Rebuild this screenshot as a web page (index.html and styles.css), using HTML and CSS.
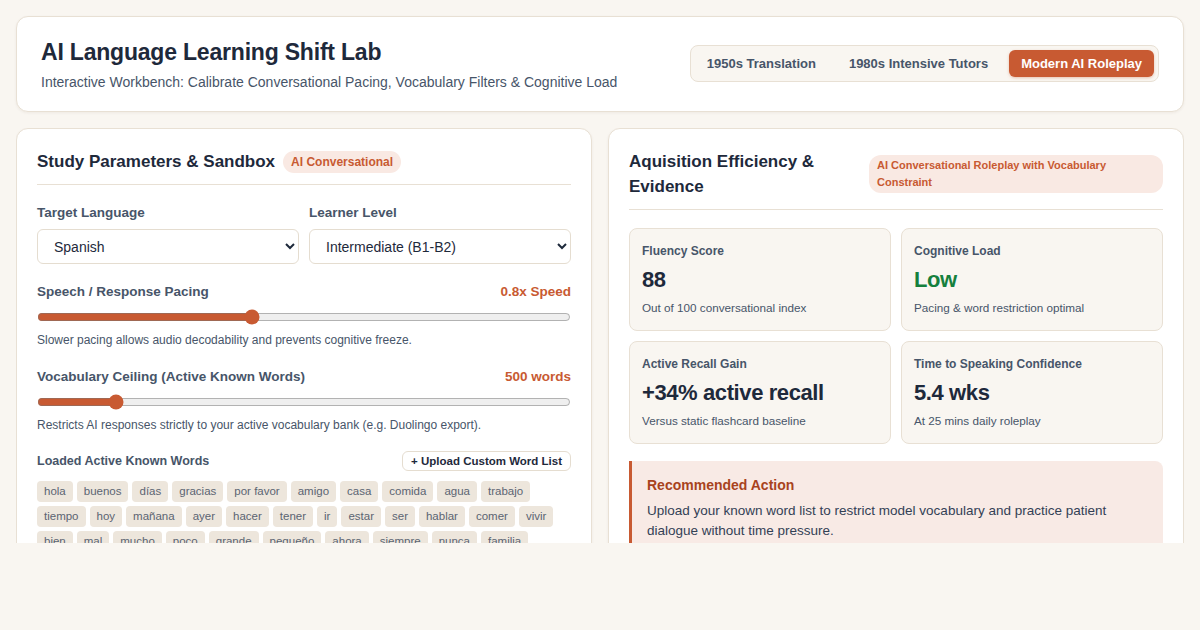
FILE: index.html
```html
<!DOCTYPE html>
<html lang="en">
<head>
    <meta charset="UTF-8">
    <meta name="viewport" content="width=device-width, initial-scale=1.0">
    <title>AI Language Learning Shift Lab</title>
    <link rel="stylesheet" href="styles.css">
</head>
<body>
    <div class="app">
        <div class="header">
            <div class="header-text">
                <h1>AI Language Learning Shift Lab</h1>
                <p>Interactive Workbench: Calibrate Conversational Pacing, Vocabulary Filters &amp; Cognitive Load</p>
            </div>
            <div class="era-tabs">
                <button class="era-tab">1950s Translation</button>
                <button class="era-tab">1980s Intensive Tutors</button>
                <button class="era-tab active">Modern AI Roleplay</button>
            </div>
        </div>

        <div class="workspace">
            <div class="panel">
                <div class="panel-header">
                    <h2>Study Parameters &amp; Sandbox</h2>
                    <span class="badge">AI Conversational</span>
                </div>

                <div class="field-row">
                    <div class="field">
                        <label>Target Language</label>
                        <select>
                            <option>Spanish</option>
                            <option>French</option>
                            <option>Japanese</option>
                        </select>
                    </div>
                    <div class="field">
                        <label>Learner Level</label>
                        <select>
                            <option>Intermediate (B1-B2)</option>
                            <option>Beginner (A1-A2)</option>
                            <option>Advanced (C1-C2)</option>
                        </select>
                    </div>
                </div>

                <div class="slider-group">
                    <div class="slider-head">
                        <span class="slider-label">Speech / Response Pacing</span>
                        <span class="slider-value">0.8x Speed</span>
                    </div>
                    <input type="range" min="0.5" max="1.25" step="0.05" value="0.8">
                    <p class="hint">Slower pacing allows audio decodability and prevents cognitive freeze.</p>
                </div>

                <div class="slider-group">
                    <div class="slider-head">
                        <span class="slider-label">Vocabulary Ceiling (Active Known Words)</span>
                        <span class="slider-value">500 words</span>
                    </div>
                    <input type="range" min="100" max="3000" step="50" value="500">
                    <p class="hint">Restricts AI responses strictly to your active vocabulary bank (e.g. Duolingo export).</p>
                </div>

                <div class="words-head">
                    <span class="words-title">Loaded Active Known Words</span>
                    <button class="upload-btn">+ Upload Custom Word List</button>
                </div>
                <div class="word-tags">
                    <span class="tag">hola</span>
                    <span class="tag">buenos</span>
                    <span class="tag">días</span>
                    <span class="tag">gracias</span>
                    <span class="tag">por favor</span>
                    <span class="tag">amigo</span>
                    <span class="tag">casa</span>
                    <span class="tag">comida</span>
                    <span class="tag">agua</span>
                    <span class="tag">trabajo</span>
                    <span class="tag">tiempo</span>
                    <span class="tag">hoy</span>
                    <span class="tag">mañana</span>
                    <span class="tag">ayer</span>
                    <span class="tag">hacer</span>
                    <span class="tag">tener</span>
                    <span class="tag">ir</span>
                    <span class="tag">estar</span>
                    <span class="tag">ser</span>
                    <span class="tag">hablar</span>
                    <span class="tag">comer</span>
                    <span class="tag">vivir</span>
                    <span class="tag">bien</span>
                    <span class="tag">mal</span>
                    <span class="tag">mucho</span>
                    <span class="tag">poco</span>
                    <span class="tag">grande</span>
                    <span class="tag">pequeño</span>
                    <span class="tag">ahora</span>
                    <span class="tag">siempre</span>
                    <span class="tag">nunca</span>
                    <span class="tag">familia</span>
                </div>
            </div>

            <div class="panel">
                <div class="panel-header results-header">
                    <h2>Aquisition Efficiency &amp; Evidence</h2>
                    <span class="badge badge-wide">AI Conversational Roleplay with Vocabulary Constraint</span>
                </div>

                <div class="metrics">
                    <div class="metric">
                        <div class="metric-label">Fluency Score</div>
                        <div class="metric-value">88</div>
                        <div class="metric-sub">Out of 100 conversational index</div>
                    </div>
                    <div class="metric">
                        <div class="metric-label">Cognitive Load</div>
                        <div class="metric-value good">Low</div>
                        <div class="metric-sub">Pacing &amp; word restriction optimal</div>
                    </div>
                    <div class="metric">
                        <div class="metric-label">Active Recall Gain</div>
                        <div class="metric-value">+34% active recall</div>
                        <div class="metric-sub">Versus static flashcard baseline</div>
                    </div>
                    <div class="metric">
                        <div class="metric-label">Time to Speaking Confidence</div>
                        <div class="metric-value">5.4 wks</div>
                        <div class="metric-sub">At 25 mins daily roleplay</div>
                    </div>
                </div>

                <div class="recommend">
                    <h3>Recommended Action</h3>
                    <p>Upload your known word list to restrict model vocabulary and practice patient dialogue without time pressure.</p>
                </div>
            </div>
        </div>
    </div>
</body>
</html>
```

FILE: styles.css
```css
body {
  margin:0;
  background:#f9f6f1;
  font-family:"Liberation Sans", Arial, sans-serif;
  color:#1e293b;
}
.app {
  padding:16px;
  display:flex;
  flex-direction:column;
  gap:16px;
}
.header {
  background:#fff;
  border:1px solid #e8e0d4;
  border-radius:12px;
  padding:22px 24px 21px;
  display:flex;
  align-items:center;
  justify-content:space-between;
  box-shadow:0 1px 3px rgba(60,40,20,0.06);
}
.header h1 {
  margin:0;
  font-size:23px;
  line-height:26px;
  font-weight:700;
  color:#1e293b;
  letter-spacing:-0.2px;
}
.header p {
  margin:9px 0 0;
  font-size:14px;
  line-height:16px;
  color:#475569;
}
.era-tabs {
  display:flex;
  gap:4px;
  background:#f9f6f1;
  border:1px solid #e8e0d4;
  border-radius:8px;
  padding:4px;
  margin-top:-2px;
}
.era-tab {
  border:none;
  background:transparent;
  font-family:inherit;
  font-size:13px;
  font-weight:700;
  color:#475569;
  padding:6px 12px;
  border-radius:6px;
  cursor:pointer;
}
.era-tab + .era-tab {
  margin-left:5px;
}
.era-tab.active {
  background:#c85a32;
  color:#fff;
  box-shadow:0 1px 3px rgba(200,90,50,0.35);
}
.workspace {
  display:grid;
  grid-template-columns:1fr 1fr;
  gap:16px;
  height:415px;
  overflow:hidden;
}
.panel {
  background:#fff;
  border:1px solid #e8e0d4;
  border-radius:12px;
  padding:20px 20px;
  box-shadow:0 1px 3px rgba(60,40,20,0.06);
}
.panel-header {
  display:flex;
  align-items:center;
  gap:8px;
  padding-bottom:10px;
  border-bottom:1px solid #e8e0d4;
  margin-bottom:20px;
}
.panel-header h2 {
  margin:0;
  font-size:17px;
  font-weight:700;
  color:#1e293b;
  line-height:25px;
}
.badge {
  background:#f9e9e3;
  color:#c85a32;
  font-size:12px;
  line-height:14px;
  font-weight:700;
  padding:4px 8px;
  border-radius:12px;
}
.results-header {
  justify-content:space-between;
  align-items:flex-start;
  gap:24px;
  margin-bottom:18px;
}
.results-header h2 {
  flex:1;
}
.badge-wide {
  flex:0 0 294px;
  box-sizing:border-box;
  line-height:17px;
  padding:2px 8px;
  margin-top:6px;
  font-size:11px;
}
.field-row {
  display:flex;
  gap:10px;
}
.field {
  flex:1;
  display:flex;
  flex-direction:column;
}
.field label {
  font-size:13.5px;
  font-weight:700;
  color:#475569;
  margin-bottom:9px;
}
.field select {
  height:35px;
  border:1px solid #e5ddd0;
  border-radius:6px;
  background:#fff;
  font-family:inherit;
  font-size:14px;
  color:#1e293b;
  padding:0 12px;
}
.slider-group {
  margin-top:20px;
}
.slider-group + .slider-group {
  margin-top:22px;
}
.slider-head {
  display:flex;
  justify-content:space-between;
  font-size:13.5px;
  font-weight:700;
}
.slider-label {
  color:#475569;
}
.slider-value {
  color:#c85a32;
}
.slider-group input {
  width:100%;
  margin:10px 0 8px;
  accent-color:#c85a32;
}
.hint {
  margin:0;
  font-size:12px;
  color:#475569;
}
.words-head {
  display:flex;
  justify-content:space-between;
  align-items:center;
  margin-top:19px;
}
.words-title {
  font-size:12.5px;
  font-weight:700;
  color:#475569;
}
.upload-btn {
  background:#fff;
  border:1px solid #e5ddd0;
  border-radius:6px;
  font-family:inherit;
  font-size:11.5px;
  line-height:14px;
  font-weight:700;
  color:#1e293b;
  padding:2px 8px;
}
.word-tags {
  display:flex;
  flex-wrap:wrap;
  gap:4px;
  margin-top:10px;
}
.tag {
  background:#ede6dc;
  color:#5b6472;
  font-size:11.5px;
  line-height:21px;
  padding:0 7px;
  border-radius:4px;
}
.metrics {
  display:grid;
  grid-template-columns:1fr 1fr;
  gap:10px;
}
.metric {
  background:#f9f6f1;
  border:1px solid #e8e0d4;
  border-radius:8px;
  padding:15px 12px 16px;
}
.metric-label {
  font-size:12px;
  font-weight:700;
  color:#475569;
}
.metric-value {
  font-size:22px;
  font-weight:700;
  color:#1e293b;
  margin-top:9px;
  letter-spacing:-0.4px;
}
.metric-value.good {
  color:#15803d;
}
.metric-sub {
  font-size:11.7px;
  color:#475569;
  margin-top:8px;
}
.recommend {
  margin-top:17px;
  background:#f8eae5;
  border-left:3px solid #c85a32;
  border-radius:0 8px 8px 0;
  padding:16px 16px 14px 15px;
}
.recommend h3 {
  margin:0 0 8px;
  font-size:14px;
  font-weight:700;
  color:#a8431d;
}
.recommend p {
  margin:0;
  font-size:13.5px;
  line-height:20px;
  color:#334155;
}
```
